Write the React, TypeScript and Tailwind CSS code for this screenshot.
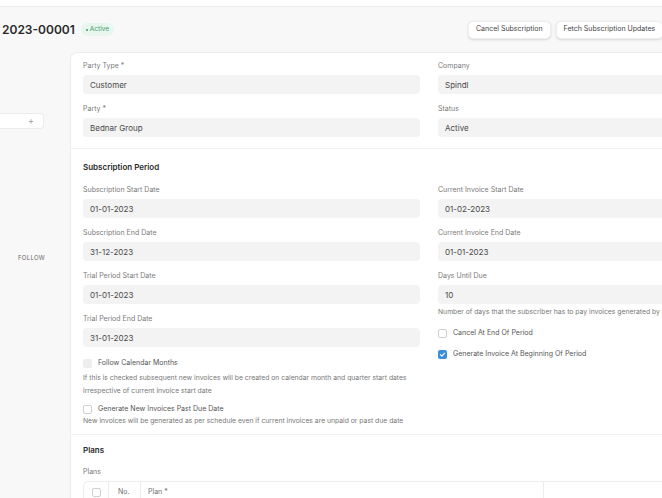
import React from 'react';

const Field: React.FC<{ label: string; value: string; className?: string }> = ({ label, value, className }) => (
  <div className={className ?? 'mb-[10px]'}>
    <div className="h-[10px] leading-[10px] text-[7px] text-[#7a7a7a]">{label}</div>
    <div className="mt-[4px] h-[19px] flex items-center bg-[#f3f3f3] rounded-[4px] px-[7px] text-[8px] text-[#4a4a4a]">
      {value}
    </div>
  </div>
);

const Check: React.FC<{ label: string; state?: 'off' | 'on' | 'disabled' }> = ({ label, state = 'off' }) => (
  <div className="h-[10px] flex items-center gap-[6px] text-[7px] text-[#555]">
    {state === 'on' ? (
      <span className="w-[9px] h-[9px] rounded-[2px] bg-[#3a8fdd] flex items-center justify-center">
        <svg viewBox="0 0 10 10" className="w-[7px] h-[7px]">
          <path d="M2 5.2 L4.1 7.2 L8 3" fill="none" stroke="white" strokeWidth="1.6" strokeLinecap="round" strokeLinejoin="round" />
        </svg>
      </span>
    ) : state === 'disabled' ? (
      <span className="w-[9px] h-[9px] rounded-[2px] bg-[#ededed]" />
    ) : (
      <span className="w-[9px] h-[9px] rounded-[2px] border border-[#cfcfcf] bg-white" />
    )}
    <span>{label}</span>
  </div>
);

const Desc: React.FC<{ children: React.ReactNode; className?: string }> = ({ children, className }) => (
  <div className={`text-[6.8px] leading-[13px] text-[#777] whitespace-nowrap ${className ?? ''}`}>{children}</div>
);

export default function App() {
  return (
    <div className="w-[662px] h-[498px] overflow-hidden bg-[#f8f8f8] font-['Inter',sans-serif]">
      <div className="w-[820px]">
        {/* Top strip */}
        <div className="h-[7px] bg-white border-b border-[#ececec]" />

        {/* Header */}
        <div className="h-[45px] flex items-center">
          <div className="w-[468px] shrink-0 flex items-center pl-[2px] gap-[6px]">
            <h1 className="text-[12px] font-semibold text-[#2a2a2a]">2023-00001</h1>
            <span className="h-[13px] px-[5px] rounded-full bg-[#e8f6ee] text-[#3a9d6a] text-[6.5px] flex items-center gap-[2px]">
              <span className="w-[2px] h-[2px] rounded-full bg-[#3a9d6a]" />
              Active
            </span>
          </div>
          <div className="flex items-center gap-[5px]">
            <button className="h-[18px] px-[7px] rounded-[5px] bg-white border border-[#ededed] shadow-sm text-[7px] text-[#444] whitespace-nowrap">
              Cancel Subscription
            </button>
            <button className="h-[18px] px-[7px] rounded-[5px] bg-white border border-[#ededed] shadow-sm text-[7px] text-[#444] whitespace-nowrap">
              Fetch Subscription Updates
            </button>
          </div>
        </div>

        {/* Body */}
        <div className="flex">
          {/* Sidebar */}
          <div className="w-[70px] shrink-0">
            <div className="mt-[61px] w-[44px] h-[16px] bg-white border border-l-0 border-[#ececec] rounded-r-[4px] flex items-center justify-end pr-[9px] text-[9px] text-[#999]">
              +
            </div>
            <div className="mt-[124px] pl-[18px] text-[6px] tracking-[0.3px] text-[#666]">FOLLOW</div>
          </div>

          {/* Card */}
          <div className="flex-1 bg-white border-l border-t border-[#ececec] rounded-tl-[7px] min-h-[460px]">
            {/* Section 1 */}
            <div className="pl-[12px] pt-[8px] pb-[1px] border-b border-[#f3f3f3] flex gap-[18px]">
              <div className="w-[337px]">
                <Field label="Party Type *" value="Customer" />
                <Field label="Party *" value="Bednar Group" />
              </div>
              <div className="w-[337px]">
                <Field label="Company" value="Spindl" />
                <Field label="Status" value="Active" />
              </div>
            </div>

            {/* Section 2 */}
            <div className="pl-[12px] pt-[12px] pb-[7px] border-b border-[#f1f1f1]">
              <div className="h-[12px] leading-[12px] text-[8px] font-semibold text-[#2a2a2a]">Subscription Period</div>
              <div className="mt-[12px] flex gap-[18px]">
                <div className="w-[337px]">
                  <Field label="Subscription Start Date" value="01-01-2023" />
                  <Field label="Subscription End Date" value="31-12-2023" />
                  <Field label="Trial Period Start Date" value="01-01-2023" />
                  <Field label="Trial Period End Date" value="31-01-2023" className="mb-[11px]" />
                  <Check label="Follow Calendar Months" state="disabled" />
                  <Desc className="mt-[3px]">
                    If this is checked subsequent new invoices will be created on calendar month and quarter start dates
                    <br />
                    irrespective of current invoice start date
                  </Desc>
                  <div className="mt-[7px]">
                    <Check label="Generate New Invoices Past Due Date" />
                  </div>
                  <Desc>
                    New invoices will be generated as per schedule even if current invoices are unpaid or past due date
                  </Desc>
                </div>
                <div className="w-[337px]">
                  <Field label="Current Invoice Start Date" value="01-02-2023" />
                  <Field label="Current Invoice End Date" value="01-01-2023" />
                  <Field label="Days Until Due" value="10" className="mb-0" />
                  <Desc className="mt-[1px] leading-[12px]">
                    Number of days that the subscriber has to pay invoices generated by this subscription
                  </Desc>
                  <div className="mt-[10px]">
                    <Check label="Cancel At End Of Period" />
                  </div>
                  <div className="mt-[11px]">
                    <Check label="Generate Invoice At Beginning Of Period" state="on" />
                  </div>
                </div>
              </div>
            </div>

            {/* Section 3 */}
            <div className="pl-[12px] pt-[9px]">
              <div className="h-[12px] leading-[12px] text-[8px] font-semibold text-[#2a2a2a]">Plans</div>
              <div className="mt-[11px] h-[10px] leading-[10px] text-[7px] text-[#7a7a7a]">Plans</div>
              <div className="mt-[4px] w-[600px] border border-[#ececec] rounded-t-[5px] flex h-[22px] text-[7px] text-[#6f6f6f]">
                <div className="w-[25px] border-r border-[#ececec] flex items-center justify-center">
                  <span className="w-[9px] h-[9px] rounded-[2px] border border-[#cfcfcf] bg-white" />
                </div>
                <div className="w-[32px] border-r border-[#ececec] flex items-center pl-[9px]">No.</div>
                <div className="w-[403px] border-r border-[#ececec] flex items-center pl-[7px]">Plan *</div>
                <div className="flex-1" />
              </div>
            </div>
          </div>
        </div>
      </div>
    </div>
  );
}
